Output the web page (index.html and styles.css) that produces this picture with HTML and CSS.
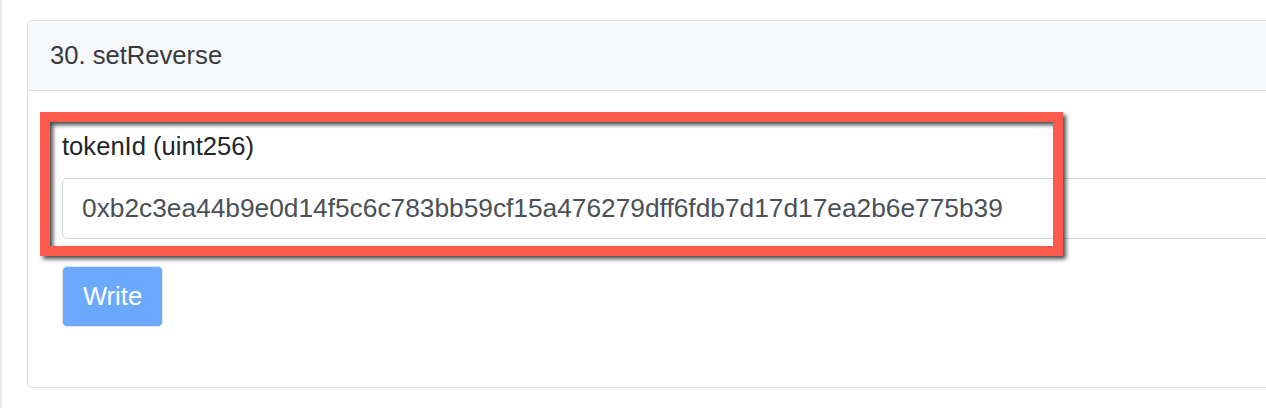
FILE: index.html
```html
<!DOCTYPE html>
<html>
<head>
<meta charset="utf-8">
<link rel="stylesheet" href="styles.css">
</head>
<body>
<div class="page">
  <div class="strip"></div>
  <main class="main">
    <section class="card">
      <header class="card-header">30. setReverse</header>
      <div class="card-body">
        <label class="field-label">tokenId (uint256)</label>
        <input class="field-input" type="text" value="0xb2c3ea44b9e0d14f5c6c783bb59cf15a476279dff6fdb7d17d17ea2b6e775b39">
        <button class="btn-write" type="button">Write</button>
      </div>
    </section>
  </main>
  <div class="highlight"></div>
</div>
</body>
</html>
```
FILE: styles.css
```css
html, body {
  margin: 0;
  padding: 0;
  background: #ffffff;
  overflow: hidden;
}

body {
  font-family: "Liberation Sans", Arial, Helvetica, sans-serif;
  width: 1266px;
  height: 408px;
}

.page {
  position: relative;
  display: flex;
  height: 408px;
}

.strip {
  width: 2px;
  flex: 0 0 2px;
  background: #e6eaf5;
}

.main {
  padding: 20px 0 0 25px;
}

.card {
  width: 1320px;
  border: 1px solid #dedede;
  border-radius: 5px;
  background: #ffffff;
  display: flex;
  flex-direction: column;
}

.card-header {
  background: #f7f8f9;
  border-bottom: 1px solid #dcdcdc;
  border-radius: 5px 5px 0 0;
  padding: 15px 22px;
  line-height: 39px;
  font-size: 25.6px;
  color: #353a40;
}

.card-body {
  padding: 36px 34px 60px 34px;
  display: flex;
  flex-direction: column;
  align-items: flex-start;
}

.field-label {
  font-size: 25.6px;
  line-height: 38px;
  color: #212529;
  margin-bottom: 13px;
}

.field-input {
  box-sizing: border-box;
  width: 1252px;
  height: 61px;
  margin: 0;
  padding: 0 19px;
  border: 1px solid #ced4da;
  border-radius: 5px;
  font-family: "Liberation Sans", Arial, Helvetica, sans-serif;
  font-size: 26.3px;
  color: #495057;
  background: #ffffff;
  outline: none;
}

.btn-write {
  box-sizing: border-box;
  margin-top: 27px;
  width: 101px;
  height: 61px;
  padding: 0;
  border: 1px solid #dfe6ee;
  border-radius: 5px;
  background: #6ba9fd;
  color: #ffffff;
  font-family: "Liberation Sans", Arial, Helvetica, sans-serif;
  font-size: 25.6px;
  line-height: 1;
}

.highlight {
  position: absolute;
  left: 40px;
  top: 112px;
  width: 1023px;
  height: 144px;
  box-sizing: border-box;
  border: 10px solid #ff5a4b;
  filter: drop-shadow(3px 3px 2px rgba(0, 0, 0, 0.7));
  pointer-events: none;
}
```
